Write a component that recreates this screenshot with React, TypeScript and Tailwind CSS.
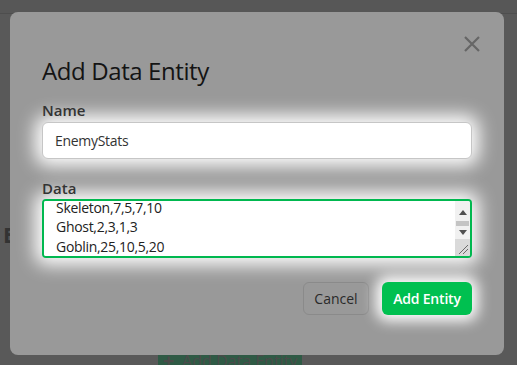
import React, { useEffect, useRef } from "react";

export default function App() {
  const taRef = useRef<HTMLTextAreaElement>(null);
  useEffect(() => {
    const t = taRef.current;
    if (t) {
      t.focus();
      const len = t.value.length;
      t.setSelectionRange(len, len);
      t.scrollTop = t.scrollHeight;
    }
  }, []);

  const data =
    "Name,HP,ATK,DEF,XP\nSlime,5,2,1,2\nOrc,30,12,8,25\nSkeleton,7,5,7,10\nGhost,2,3,1,3\nGoblin,25,10,5,20";

  return (
    <div
      className="relative w-[517px] h-[365px] overflow-hidden bg-[#595959]"
      style={{ fontFamily: '"Segoe UI", "Open Sans", "Noto Sans", sans-serif' }}
    >
      {/* background page (dimmed) */}
      <div className="h-[14px] border-b border-[#4e4e4e] bg-[#575757]" />
      <div className="absolute left-[3px] top-[218px] text-[22px] font-bold text-[#333]">E</div>
      <div className="absolute left-[158px] top-[346px] flex h-[30px] w-[144px] items-center justify-center gap-2 bg-[#2f5a45] text-[16px] text-[#4a4a4a]">
        <span className="text-[20px] font-bold">+</span>
        <span>Add Data Entity</span>
      </div>

      {/* modal */}
      <div className="absolute left-[10px] top-[12px] h-[343px] w-[494px] rounded-[8px] bg-[#999999] px-8 pt-[43px]">
        <button className="absolute right-[22px] top-[22px] flex h-[20px] w-[20px] items-center justify-center">
          <svg width="18" height="18" viewBox="0 0 18 18" fill="none" stroke="#666" strokeWidth="2.2">
            <path d="M2 2 L16 16 M16 2 L2 16" />
          </svg>
        </button>
        <h2 className="text-[24px] leading-[32px] font-normal tracking-[-0.4px] text-[#141414]">Add Data Entity</h2>
        <div className="mt-[13px] text-[15px] font-semibold leading-[20px] text-[#333]">Name</div>
        <input
          defaultValue="EnemyStats"
          className="mt-[2px] block h-[37px] w-[430px] rounded-[6px] border border-[#c6c6c6] bg-white px-3 text-[14px] tracking-[-0.3px] text-[#333] shadow-[0_0_18px_7px_#ffffff] outline-none"
        />
        <div className="mt-[19px] text-[15px] font-semibold leading-[20px] text-[#333]">Data</div>
        <div className="mt-[1px] flex h-[59px] w-[430px] overflow-hidden rounded-[4px] border-2 border-[#00b84f] bg-white shadow-[0_0_18px_7px_#ffffff]">
          <textarea
            ref={taRef}
            defaultValue={data}
            className="h-full flex-1 resize-none overflow-hidden bg-white pl-3 pr-1 pt-0 pb-0 text-[14px] leading-[19.5px] tracking-[-0.3px] text-[#222] caret-black outline-none"
          />
          <div className="flex w-[15px] flex-col bg-[#f1f1f1]">
            <div className="flex h-[18px] items-end justify-center pb-[4px]">
              <svg width="8" height="5" viewBox="0 0 8 5">
                <path d="M0 5 L4 0 L8 5 Z" fill="#505050" />
              </svg>
            </div>
            <div className="mx-[1px] mt-[2px] h-[5px] bg-[#c4c4c4]" />
            <div className="flex h-[12px] items-center justify-center">
              <svg width="8" height="5" viewBox="0 0 8 5">
                <path d="M0 0 L8 0 L4 5 Z" fill="#505050" />
              </svg>
            </div>
            <div className="flex-1" />
            <div className="relative h-[17px] bg-[#dadada]">
              <svg className="absolute right-[1px] bottom-[1px]" width="12" height="12" viewBox="0 0 12 12" stroke="#6a6a6a" strokeWidth="1">
                <path d="M11 2 L2 11 M11 6 L6 11" />
              </svg>
            </div>
          </div>
        </div>
        <div className="mt-[24px] flex justify-end gap-[13px]">
          <button className="h-[33px] w-[66px] rounded-[6px] border border-[#8a8a8a] text-[14px] text-[#2a2a2a]">
            Cancel
          </button>
          <button className="h-[33px] w-[90px] rounded-[6px] bg-[#00c050] text-[14px] font-semibold tracking-[-0.2px] text-white shadow-[0_0_14px_6px_#ffffff]">
            Add Entity
          </button>
        </div>
      </div>
    </div>
  );
}
